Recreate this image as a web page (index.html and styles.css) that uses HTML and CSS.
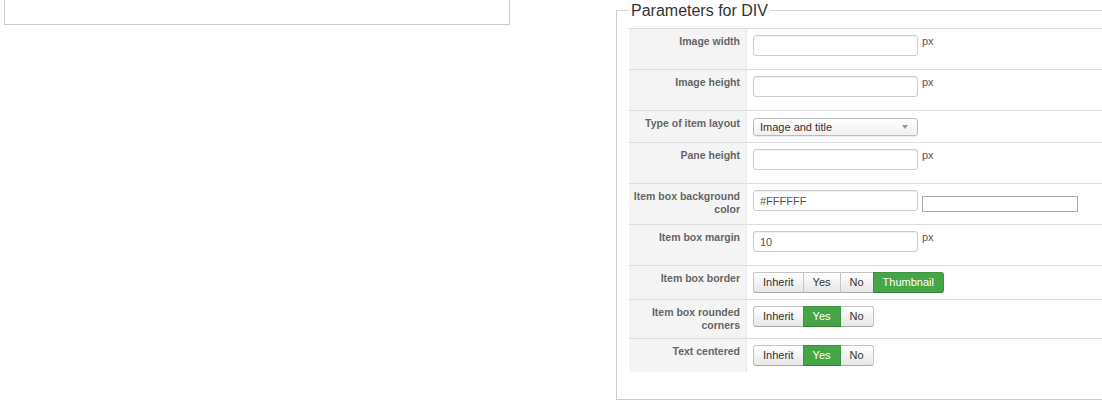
FILE: index.html
```html
<!DOCTYPE html>
<html>
<head>
<meta charset="utf-8">
<link rel="stylesheet" href="styles.css">
</head>
<body>
<div class="page">
  <div class="left-box"></div>
  <fieldset class="params">
    <legend>Parameters for DIV</legend>
    <table class="paramlist">
      <tr>
        <td class="key">Image width</td>
        <td class="val"><div class="field"><input class="txt" type="text" value=""><span class="unit">px</span></div></td>
      </tr>
      <tr>
        <td class="key">Image height</td>
        <td class="val"><div class="field"><input class="txt" type="text" value=""><span class="unit">px</span></div></td>
      </tr>
      <tr>
        <td class="key">Type of item layout</td>
        <td class="val"><div class="select"><span>Image and title</span><span class="caret"></span></div></td>
      </tr>
      <tr>
        <td class="key">Pane height</td>
        <td class="val"><div class="field"><input class="txt" type="text" value=""><span class="unit">px</span></div></td>
      </tr>
      <tr>
        <td class="key">Item box background<br>color</td>
        <td class="val"><div class="field"><input class="txt" type="text" value="#FFFFFF"><span class="swatch"></span></div></td>
      </tr>
      <tr>
        <td class="key">Item box margin</td>
        <td class="val"><div class="field"><input class="txt" type="text" value="10"><span class="unit">px</span></div></td>
      </tr>
      <tr>
        <td class="key">Item box border</td>
        <td class="val"><div class="btn-group"><span class="btn">Inherit</span><span class="btn">Yes</span><span class="btn">No</span><span class="btn on">Thumbnail</span></div></td>
      </tr>
      <tr>
        <td class="key">Item box rounded<br>corners</td>
        <td class="val"><div class="btn-group"><span class="btn">Inherit</span><span class="btn on">Yes</span><span class="btn">No</span></div></td>
      </tr>
      <tr>
        <td class="key">Text centered</td>
        <td class="val"><div class="btn-group"><span class="btn">Inherit</span><span class="btn on">Yes</span><span class="btn">No</span></div></td>
      </tr>
    </table>
  </fieldset>
</div>
</body>
</html>
```
FILE: styles.css
```css
html, body {
  margin: 0;
  padding: 0;
  overflow: hidden;
  background: #fff;
  font-family: "Liberation Sans", Arial, sans-serif;
}
.page {
  display: flex;
  align-items: flex-start;
  width: 1200px;
}
.left-box {
  margin-left: 4px;
  width: 506px;
  height: 25px;
  box-sizing: border-box;
  border: 1px solid #ccc;
  border-top: none;
  flex: none;
}
.params {
  flex: none;
  margin: 0 0 0 106px;
  width: 560px;
  padding: 8px 12px 26px 12px;
  border: 1px solid #ccc;
  border-top-color: #d4d4d4;
  box-sizing: border-box;
  height: 400px;
}
.params legend {
  font-size: 16px;
  line-height: 18px;
  padding: 2px 2px 0 2px;
  color: #333;
  margin-left: 0;
}
.paramlist {
  width: 100%;
  border-collapse: collapse;
  border-spacing: 0;
}
.paramlist td {
  border-top: 1px solid #ddd;
  vertical-align: top;
  padding: 6px 6px 6px 6px;
}
.paramlist td.key {
  width: 109px;
  padding-left: 2px;
  white-space: nowrap;
  background: #f4f4f4;
  border-right: 1px solid #e8e8e8;
  text-align: right;
  font-size: 10.5px;
  font-weight: bold;
  line-height: 13px;
  color: #666;
}
.field {
  display: flex;
  align-items: flex-start;
  gap: 4px;
}
.txt {
  box-sizing: border-box;
  width: 165px;
  height: 21px;
  margin: 0 0 7px 0;
  padding: 0 6px;
  border: 1px solid #ccc;
  border-radius: 3px;
  box-shadow: inset 0 1px 1px rgba(0,0,0,0.06);
  font-family: inherit;
  font-size: 11px;
  color: #555;
  outline: none;
}
.unit {
  font-size: 11px;
  line-height: 13px;
  color: #555;
}
.swatch {
  display: block;
  width: 156px;
  height: 16px;
  box-sizing: border-box;
  border: 1px solid #a8a8a8;
  margin-top: 6px;
  background: #fff;
}
.select {
  box-sizing: border-box;
  width: 165px;
  height: 18px;
  margin-top: 1px;
  border: 1px solid #bbb;
  border-radius: 3px;
  background: linear-gradient(#ffffff, #f0f0f0);
  box-shadow: 0 1px 1px rgba(0,0,0,0.08);
  display: flex;
  align-items: center;
  justify-content: space-between;
  padding: 0 9px 0 6px;
  font-size: 11px;
  color: #333;
}
.caret {
  width: 0;
  height: 0;
  border-left: 3px solid transparent;
  border-right: 3px solid transparent;
  border-top: 4px solid #999;
}
.btn-group {
  display: flex;
}
.btn {
  box-sizing: border-box;
  height: 21px;
  line-height: 19px;
  padding: 0 9px;
  border: 1px solid #c4c4c4;
  border-bottom-color: #aaa;
  background: linear-gradient(#ffffff, #e6e6e6);
  font-size: 11px;
  color: #333;
  margin-left: -1px;
}
.btn:first-child {
  margin-left: 0;
  border-radius: 3px 0 0 3px;
}
.btn:last-child {
  border-radius: 0 3px 3px 0;
}
.btn.on {
  background: #46a546;
  border-color: #3f943f;
  border-bottom-color: #357d35;
  color: #fff;
  position: relative;
}
```
